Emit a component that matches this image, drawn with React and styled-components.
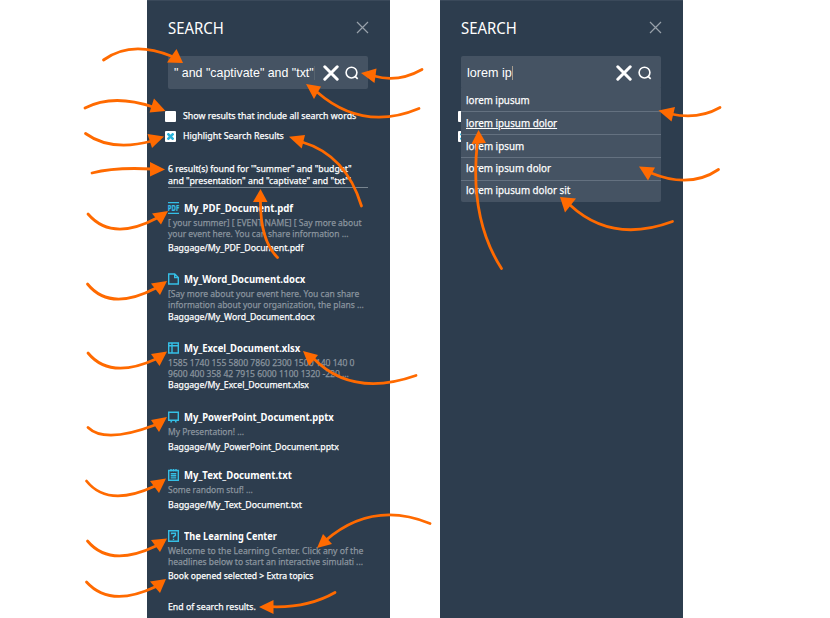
import React, { useLayoutEffect, useRef, useState } from "react";
import styled, { createGlobalStyle } from "styled-components";

const GlobalStyle = createGlobalStyle`
  body { margin: 0; background: #fff; }
  * { box-sizing: border-box; }
`;

const Page = styled.main`
  position: relative;
  width: 830px;
  height: 618px;
  overflow: hidden;
  display: flex;
  gap: 50px;
  padding-left: 147px;
  font-family: "Noto Sans", "Open Sans", sans-serif;
`;

const Panel = styled.section`
  width: 243px;
  height: 618px;
  padding: 0 21px;
  background: #2d3d4e;
  border-top: 1px solid #3a495a;
  color: #fff;
`;

const Header = styled.header`
  height: 55px;
  padding-bottom: 2px;
  display: flex;
  justify-content: space-between;
  align-items: center;
`;

const Title = styled.h1`
  margin: 0;
  font-size: 16px;
  line-height: 20px;
  font-weight: 400;
`;

const CloseIcon = styled.svg`
  width: 13px;
  height: 13px;
  stroke: #98a1aa;
  stroke-width: 1.2;
`;

const SearchBox = styled.div`
  width: 200px;
  height: 33px;
  padding: 0 9px 0 6px;
  display: flex;
  align-items: center;
  background: #455363;
  border-radius: 2px;
  font-family: "Liberation Sans", Arial, sans-serif;
  font-size: 13px;
  line-height: 15px;
`;

const Caret = styled.i`
  width: 1px;
  height: 14px;
  background: ${(p) => p.$color};
`;

const SearchIcons = styled.svg`
  width: 36px;
  height: 18px;
  margin-left: auto;
  fill: none;
  stroke: #fff;
`;

const Fitted = styled.span`
  display: block;
  flex: none;
  width: ${(p) => p.$width}px;
  white-space: pre;
  & > span {
    display: inline-block;
    vertical-align: top;
    transform-origin: 0 50%;
    text-decoration: ${(p) => (p.$underline ? "underline" : "none")};
    text-underline-offset: 1px;
  }
`;

function Text({ width, underline, children }) {
  const ref = useRef(null);
  const [scale, setScale] = useState(1);
  useLayoutEffect(() => {
    setScale(width / ref.current.offsetWidth);
  }, [width]);
  return (
    <Fitted $width={width} $underline={underline}>
      <span ref={ref} style={{ transform: `scaleX(${scale})` }}>{children}</span>
    </Fitted>
  );
}

const Options = styled.div`
  margin: 22px 0 0 -3px;
  display: grid;
  row-gap: 9px;
`;

const Option = styled.label`
  height: 11px;
  display: flex;
  align-items: flex-start;
  gap: 6.5px;
  font-size: 9.5px;
  line-height: 10px;
  -webkit-text-stroke: 0.25px #fff;
`;

const Box = styled.span`
  width: 11px;
  height: 11px;
  flex: none;
  display: grid;
  place-items: center;
  background: #fff;
  border-radius: 1px;
  svg { width: 7px; height: 7px; stroke: #28b4dc; stroke-width: 2.6; }
`;

const Line = styled.div`
  margin-top: ${(p) => p.$gap || 0}px;
  height: 10px;
  font-size: 9.5px;
  line-height: 10px;
  -webkit-text-stroke: 0.25px #fff;
`;

const Snippet = styled(Line)`
  color: #8b959f;
  -webkit-text-stroke: 0.25px #8b959f;
`;

const Summary = styled.div`
  width: 200px;
  margin-top: 22px;
  height: 24px;
  border-bottom: 1px solid #788590;
`;

const ResultTitle = styled(Line)`
  display: flex;
  align-items: center;
  gap: 5px;
  font-size: 10px;
  font-weight: 700;
  -webkit-text-stroke: 0;
`;

const FileIcon = styled.svg`
  width: 11px;
  height: 12px;
  flex: none;
  overflow: visible;
  fill: none;
  stroke: #35bfe6;
  stroke-width: 1.4;
  text {
    fill: #35bfe6;
    stroke: #35bfe6;
    stroke-width: 0.2;
    font: 700 8px "Noto Sans", sans-serif;
  }
`;

const Suggestions = styled.ul`
  position: relative;
  list-style: none;
  margin: -1px 0 0;
  padding: 0;
  width: 200px;
  background: #455363;
  border-radius: 0 0 2px 2px;
`;

const Suggestion = styled.li`
  height: ${(p) => p.$height}px;
  padding: ${(p) => p.$top}px 0 0 5px;
  font-size: 10.5px;
  line-height: 12px;
  -webkit-text-stroke: 0.25px #fff;
  border-bottom: ${(p) => (p.$last ? "0" : "1px solid #647180")};
`;

const HiddenOptions = styled.div`
  height: 31px;
  margin: -91px 0 0 -3px;
  display: grid;
  row-gap: 9px;
`;

const Annotations = styled.svg`
  position: absolute;
  inset: 0;
  width: 830px;
  height: 618px;
  fill: none;
  stroke: #ff6a00;
  stroke-width: 2.8;
  stroke-linecap: round;
  pointer-events: none;
  polygon { fill: #ff6a00; stroke: none; }
`;

const Close = () => (
  <CloseIcon viewBox="0 0 13 13"><path d="M1 1L12 12M12 1L1 12" /></CloseIcon>
);

const ClearAndFind = () => (
  <SearchIcons viewBox="0 0 36 18">
    <path d="M1.8 2.8L14.2 15.2M14.2 2.8L1.8 15.2" strokeWidth="3" strokeLinecap="round" />
    <circle cx="28.5" cy="8.6" r="5.4" strokeWidth="1.6" />
    <path d="M31.9 12.2L34.7 14.8" strokeWidth="1.7" />
  </SearchIcons>
);

const Cross = () => (
  <svg viewBox="0 0 7 7"><path d="M.5 .5L6.5 6.5M6.5 .5L.5 6.5" /></svg>
);

const icons = {
  pdf: (<><path d="M0 .6H11M0 11.4H11" /><text x="-.2" y="8.9" textLength="11.4" lengthAdjust="spacingAndGlyphs">PDF</text></>),
  doc: <path d="M.7 1H6.7L10.3 4.6V11H.7ZM6.7 1V4.6H10.3" />,
  xls: <path d="M.7 1H10.3V11H.7ZM.7 3.8H10.3M4 1V11" />,
  ppt: <path d="M.7 1.2H10.3V9.2H.7ZM3.8 9.2L2.8 11.6M7.2 9.2L8.2 11.6" />,
  txt: <path d="M.7 1.5H10.3V11.3H.7ZM3 0V2.5M5.5 0V2.5M8 0V2.5M2.7 4.7H8.3M2.7 6.8H8.3M2.7 8.9H8.3" />,
  help: <path d="M.7 .7H10.3V11.3H.7ZM3.6 4.2V3.2H7.4V5.3L5.5 6.6V7.7M5.5 8.7V9.9" />,
};

const results = [
  { icon: "pdf", gap: 15, title: ["My_PDF_Document.pdf", 109.5],
    text: [["[ your summer] [ EVENT NAME] [ Say more about", 193.5, 5], ["your event here. You can share information ...", 180.5, 1]],
    path: ["Baggage/My_PDF_Document.pdf", 135.5, 4] },
  { icon: "doc", gap: 21, title: ["My_Word_Document.docx", 121.5],
    text: [["[Say more about your event here. You can share", 191, 5], ["information about your organization, the plans ...", 196, 1]],
    path: ["Baggage/My_Word_Document.docx", 147, 2] },
  { icon: "xls", gap: 21, title: ["My_Excel_Document.xlsx", 116.5],
    text: [["1585 1740 155 5800 7860 2300 1500 140 140 0", 186.5, 5], ["9600 400 358 42 7915 6000 1100 1320 -220 ...", 180.5, 1]],
    path: ["Baggage/My_Excel_Document.xlsx", 141, 1] },
  { icon: "ppt", gap: 22, title: ["My_PowerPoint_Document.pptx", 149.5],
    text: [["My Presentation! ...", 75.5, 5]],
    path: ["Baggage/My_PowerPoint_Document.pptx", 171, 5] },
  { icon: "txt", gap: 18, title: ["My_Text_Document.txt", 107.5],
    text: [["Some random stuf! ...", 84.5, 5]],
    path: ["Baggage/My_Text_Document.txt", 133.5, 5] },
  { icon: "help", gap: 21, title: ["The Learning Center", 92.5],
    text: [["Welcome to the Learning Center. Click any of the", 195, 5], ["headlines below to start an interactive simulati ...", 195, 1]],
    path: ["Book opened selected > Extra topics", 145.5, 4] },
];

const suggestions = [
  { label: "lorem ipusum", width: 64, height: 24, top: 6 },
  { label: "lorem ipusum dolor", width: 91.5, height: 23, top: 5, active: true },
  { label: "lorem ipsum", width: 58, height: 23, top: 5 },
  { label: "lorem ipsum dolor", width: 85, height: 23, top: 4 },
  { label: "lorem ipusum dolor sit", width: 104.5, height: 21, top: 3 },
];

const arrows = [
  ["M103.5 60Q131 40 171 56", "183,63 176.5,49 167,62.5"],
  ["M85 108Q113 93.5 153 107", "165.5,111 154,98.5 149.5,112.5"],
  ["M85.5 133.5Q111 152 152 141", "164,136.5 147.5,134 152,148"],
  ["M422 69.5Q398 83 374 76", "361,73 376.5,68.5 374.5,83"],
  ["M419 108.5Q363 132 317 92", "306,84 321,86.5 314,99"],
  ["M361.5 206Q346 155 302 142", "289,136.7 305,135 301.7,148.5"],
  ["M92 173Q115 167 152 169", "165,169.5 150,162 150,176.5"],
  ["M88 214Q112 242 157 218", "168,211 152,213.5 161,224.5"],
  ["M87.5 284Q110 312 156 288", "167,281 151,283.5 160,295"],
  ["M277.5 257.5Q260 240 260.5 200", "260.5,189 253,202 267.5,202"],
  ["M88 353Q110 380 156 359", "167,351.5 151,354 159.5,366"],
  ["M416 375.5Q352 398 313 358", "303,351 318,355 309,366"],
  ["M88 427.5Q105 444 155 425", "167,417 151,420 159,432"],
  ["M86.5 481Q108 508 155 486", "166,478.5 150,481 159,493"],
  ["M87.5 541Q110 568 156 546", "167,538.5 151,540 160,552"],
  ["M86.5 582Q110 608 155 587", "166,579 150,581.5 160,593"],
  ["M430 523.5Q372 500 325 541", "317,548 323,534 332,544"],
  ["M335 592.5Q308 608 271 606.7", "259,607 273.5,600 273.5,614"],
  ["M501.5 268.5C478 232 472 190 477.5 141", "478.5,130 471.5,144 486,143"],
  ["M720 107.5Q698 120 671 114", "658.5,110.5 675,107 671.5,121.5"],
  ["M718.5 169.5Q690 189 651 173", "639,166.5 655,167.5 648,180.5"],
  ["M672.5 221.5Q612 244 570 205", "560,197 576,198.5 565,212.5"],
];

const Result = ({ item }) => (
  <article>
    <ResultTitle $gap={item.gap}>
      <FileIcon viewBox="0 0 11 12">{icons[item.icon]}</FileIcon>
      <Text width={item.title[1]}>{item.title[0]}</Text>
    </ResultTitle>
    {item.text.map(([t, w, g]) => <Snippet key={t} $gap={g}><Text width={w}>{t}</Text></Snippet>)}
    <Line $gap={item.path[2]}><Text width={item.path[1]}>{item.path[0]}</Text></Line>
  </article>
);

export default function App() {
  return (
    <>
      <GlobalStyle />
      <Page>
        <Panel>
          <Header><Title><Text width={56}>SEARCH</Text></Title><Close /></Header>
          <SearchBox>
            <Text width={140}>{'" and "captivate" and "txt"'}</Text>
            <Caret $color="#56636f" />
            <ClearAndFind />
          </SearchBox>
          <Options>
            <Option><Box /><Text width={173}>Show results that include all search words</Text></Option>
            <Option><Box><Cross /></Box><Text width={100.5}>Highlight Search Results</Text></Option>
          </Options>
          <Summary>
            <Line><Text width={183.5}>{'6 result(s) found for \'"summer" and "budget"'}</Text></Line>
            <Line $gap={2}><Text width={182.5}>{'and "presentation" and "captivate" and "txt"\''}</Text></Line>
          </Summary>
          {results.map((r) => <Result key={r.icon} item={r} />)}
          <Line $gap={21}><Text width={87.5}>End of search results.</Text></Line>
        </Panel>
        <Panel>
          <Header><Title><Text width={56}>SEARCH</Text></Title><Close /></Header>
          <SearchBox>
            <Text width={44.5}>lorem ip</Text>
            <Caret $color="#a69b8e" />
            <ClearAndFind />
          </SearchBox>
          <Suggestions>
            {suggestions.map((s, i) => (
              <Suggestion key={s.label} $height={s.height} $top={s.top} $last={i === 4}>
                <Text width={s.width} underline={s.active}>{s.label}</Text>
              </Suggestion>
            ))}
          </Suggestions>
          <HiddenOptions><Box /><Box><Cross /></Box></HiddenOptions>
        </Panel>
        <Annotations viewBox="0 0 830 618">
          {arrows.map(([d, head]) => <g key={d}><path d={d} /><polygon points={head} /></g>)}
        </Annotations>
      </Page>
    </>
  );
}
